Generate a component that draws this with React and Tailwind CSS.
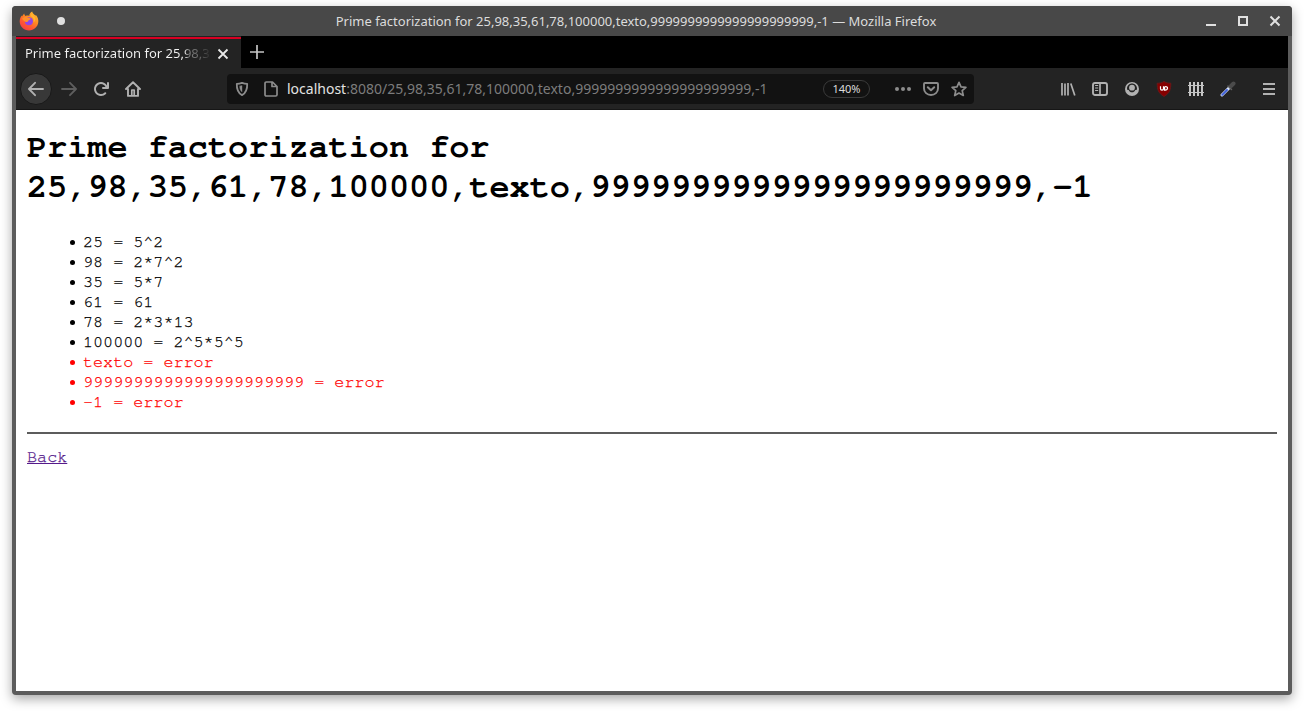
import React from "react";

const PATH = "25,98,35,61,78,100000,texto,9999999999999999999999,-1";

const RESULTS = [
  { n: "25", f: "5^2" },
  { n: "98", f: "2*7^2" },
  { n: "35", f: "5*7" },
  { n: "61", f: "61" },
  { n: "78", f: "2*3*13" },
  { n: "100000", f: "2^5*5^5" },
  { n: "texto", f: "error" },
  { n: "9999999999999999999999", f: "error" },
  { n: "-1", f: "error" },
];

function Icon({ children, className = "text-[#b1b1b1]" }) {
  return (
    <svg
      viewBox="0 0 16 16"
      className={"block size-4 shrink-0 " + className}
      fill="none"
      stroke="currentColor"
      strokeWidth="2"
      strokeLinecap="round"
      strokeLinejoin="round"
    >
      {children}
    </svg>
  );
}

function Firefox() {
  return (
    <svg viewBox="0 0 20 20" className="block size-5 shrink-0">
      <defs>
        <linearGradient id="flame" x1="0.8" y1="0.1" x2="0.2" y2="1">
          <stop offset="0" stopColor="#ffb52e" />
          <stop offset="0.35" stopColor="#ff8a22" />
          <stop offset="0.65" stopColor="#ff5a30" />
          <stop offset="1" stopColor="#f53a45" />
        </linearGradient>
      </defs>
      <path
        d="M13.2.4c.2 2 2 2.600 3.300 4.200l.6-.3c1.700 2 2.500 4.200 2.200 6.700-.5 5-4.400 8.400-9.300 8.400C4.900 19.400.7 15.500.7 10.500c0-2.300.7-4.500 2.100-6l.2 1.100C3.700 4.400 4.300 3.300 5.200 2.500c.1 1.200.7 2 1.300 2.500 1.200-.5 2.600-.6 3.800-.1C10.300 3 11.300 1.300 13.200.4z"
        fill="url(#flame)"
      />
      <circle cx="9.900" cy="10.200" r="4" fill="#9045e6" />
      <path d="M3 7.500c2-1.800 4.700-2.200 6.700-.5 1 .1 1.800.3 2 .7-.3 1-1.900 1.300-2.500 2-.2 1.300-1.700 1.500-2.800 1C5.100 10.100 4.100 9.300 3 7.500z" fill="#ff8f2b" />
      <path d="M11.800 5c2.800 1.300 3.700 4 2.500 6.500 1.500-1 2.100-2.300 2.100-4-.7-2.500-2.800-3-3.200-5-.8.700-1.300 1.500-1.400 2.500z" fill="#ffb431" />
    </svg>
  );
}

function TitleBar() {
  return (
    <div className="flex h-[30px] items-center rounded-t-[4px] bg-[#484848] pl-[7px] pr-[9px]">
      <Firefox />
      <div className="ml-[18px] size-2 rounded-full bg-[#e0e0e0]" />
      <div className="flex-1 pl-[4px] text-center text-[13px] leading-[30px] tracking-[-0.01px] text-[#dcdcdc]">
        <span className="inline-block whitespace-nowrap">Prime factorization for {PATH} — Mozilla Firefox</span>
      </div>
      <div className="flex items-center gap-4 text-[#e0e0e0]">
        <svg viewBox="0 0 16 16" className="block size-4"><path d="M3 11h10v2H3z" fill="currentColor" /></svg>
        <svg viewBox="0 0 16 16" className="block size-4"><path d="M4 4h8v8H4z" fill="none" stroke="currentColor" strokeWidth="2" /></svg>
        <svg viewBox="0 0 16 16" className="block size-4"><path d="M3.500 3.500l9 9m0-9l-9 9" fill="none" stroke="currentColor" strokeWidth="2" /></svg>
      </div>
    </div>
  );
}

function TabBar() {
  return (
    <div className="flex h-8 bg-black">
      <div className="w-[225px] bg-[#232323] pt-px">
        <div className="flex h-[31px] items-center border-t-2 border-[#d70022] pl-[9px]">
          <div className="w-[190px] whitespace-nowrap bg-[linear-gradient(90deg,#f4f4f4_84%,#808080_86%,#606060_93%,#232323_98%)] bg-clip-text text-[13px] text-transparent">
            Prime factorization for 25,98,3
          </div>
          <svg viewBox="0 0 16 16" className="block size-4 text-[#e8e8e8]">
            <path d="M3.500 3.500l9 9m0-9l-9 9" fill="none" stroke="currentColor" strokeWidth="1.800" />
          </svg>
        </div>
      </div>
      <div className="flex w-8 items-center justify-center text-[#c4c4c4]">
        <svg viewBox="0 0 16 16" className="block size-4"><path d="M8 1v14M1 8h14" fill="none" stroke="currentColor" strokeWidth="1.700" /></svg>
      </div>
    </div>
  );
}

function UrlBar() {
  return (
    <div className="ml-[86px] flex h-[30px] w-[747px] items-center rounded-[4px] bg-[#121212] pl-[7px] pr-[7px]">
      <Icon className="text-[#8c8c8c]">
        <path d="M8 1.900c2 .7 3.500.9 5.200.9.200 5.200-.7 9-5.200 11.300C3.500 11.800 2.600 8 2.800 2.800 4.500 2.800 6 2.600 8 1.900z" strokeWidth="1.800" />
        <path d="M8 4.800v6.100C6.200 9.500 5.700 7.500 5.700 5.200z" fill="currentColor" strokeWidth="0.400" />
      </Icon>
      <Icon className="ml-[13px] text-[#8c8c8c]">
        <path d="M3.300 1h6.200l4.500 4.500v8.200c0 .8-.5 1.300-1.300 1.300H3.300C2.500 15 2 14.500 2 13.700V2.300C2 1.500 2.500 1 3.300 1zM9 1.200v4.300h4.500" strokeWidth="1.700" />
      </Icon>
      <div className="ml-[8px] w-[536px] whitespace-nowrap text-[14px] text-[#7c7c7c]">
        <span className="text-[#e3e3e3]">localhost</span>:8080/{PATH}
      </div>
      <div className="flex h-[18px] w-[47px] items-center justify-center rounded-full border border-[#3a3a3a] pt-px text-[11px] text-[#dcdcdc]">140%</div>
      <div className="ml-auto flex items-center gap-3">
        <Icon className="text-[#8c8c8c]">
          <g fill="currentColor" stroke="none">
            <circle cx="2" cy="8" r="2" /><circle cx="8" cy="8" r="2" /><circle cx="14" cy="8" r="2" />
          </g>
        </Icon>
        <Icon className="text-[#8c8c8c]">
          <path d="M2 2h12c.6 0 1 .4 1 1v4.500c0 3.700-3 6.500-7 6.500s-7-2.800-7-6.500V3c0-.6.4-1 1-1z" strokeWidth="1.900" />
          <path d="M4.800 6.300L8 9.300l3.200-3" />
        </Icon>
        <Icon className="text-[#8c8c8c]">
          <path d="M8 1.300l2 4.500 4.900.5-3.700 3.300 1.100 4.900L8 12l-4.300 2.500 1.100-4.900L1.100 6.300 6 5.800z" strokeWidth="1.700" />
        </Icon>
      </div>
    </div>
  );
}

function Toolbar() {
  return (
    <div className="flex h-[42px] items-center border-b border-[#161616] bg-[#232323] pl-1">
      <div className="flex size-8 items-center justify-center rounded-full border border-[#191919] bg-[#383838]">
        <Icon>
          <path d="M15 8H1.300M7 1.800L1 8l6 6.200" strokeWidth="1.900" />
        </Icon>
      </div>
      <div className="ml-[9px] flex gap-4">
        <Icon className="text-[#5e5e5e]">
          <path d="M1 8h13.700M9 1.800L15 8l-6 6.200" strokeWidth="1.800" />
        </Icon>
        <Icon>
          <path
            d="M15 1a1 1 0 0 0-1 1v2.418A6.995 6.995 0 1 0 8 15a6.954 6.954 0 0 0 4.950-2.050 1 1 0 0 0-1.414-1.414A5.019 5.019 0 1 1 12.549 6H10a1 1 0 0 0 0 2h5a1 1 0 0 0 1-1V2a1 1 0 0 0-1-1z"
            fill="currentColor"
            stroke="none"
          />
        </Icon>
        <Icon>
          <path d="M1 8l7-6.800L15 8M3 8v6.900h10V8" strokeWidth="1.900" />
          <path d="M6.800 14V9h2.400v5" strokeWidth="1.700" />
        </Icon>
      </div>
      <UrlBar />
      <div className="ml-auto flex items-center gap-4 pr-[11px]">
        <Icon>
          <path d="M2 2v12.500M5 2.500v12M8 2v12.500M10.800 2.500l4 12" strokeWidth="1.700" strokeLinecap="butt" />
        </Icon>
        <Icon>
          <rect x="1" y="2" width="14" height="12" rx="2" strokeWidth="1.900" />
          <path d="M8 2v12" strokeWidth="1.700" />
          <path d="M3.500 4.500h2.300M3.500 7h2.300M3.500 9.500h2.300" strokeWidth="1" />
        </Icon>
        <Icon>
          <circle cx="8" cy="8" r="7" fill="currentColor" stroke="none" />
          <path d="M8 2.500c-2.700 0-5 2.200-5 5 0 .6.200 1.200.5 1.500h1.200C5.300 10.500 6.500 11.300 8 11.300s2.700-.8 3.300-2.300h1.200c.3-.3.500-.9.500-1.500 0-2.800-2.300-5-5-5z" fill="#232323" stroke="none" />
          <circle cx="8" cy="6.700" r="2.900" fill="currentColor" stroke="none" />
        </Icon>
        <svg viewBox="0 0 16 16" className="block size-4">
          <path d="M8 .4c2.200 1.500 4.500 1.800 6.800 1.800 0 6.200-.8 9.800-6.800 13.300C2 12 1.200 8.400 1.200 2.200 3.500 2.200 5.800 1.900 8 .4z" fill="#860000" stroke="#6a1a1c" strokeWidth="0.800" />
          <path d="M4.500 5.200v2.600c0 1.800 3 1.800 3 0V5.200M8.600 5.400v3.700c3.800.2 3.800-4 .6-3.500" fill="none" stroke="#fff" strokeWidth="1.200" />
        </svg>
        <Icon className="text-[#c4c4c4]">
          <path d="M2 1v14M6 1v14M10 1v14M14 1v14" strokeWidth="2" strokeLinecap="butt" />
          <path d="M0 4.500h16M0 11.500h16" strokeWidth="1.200" strokeLinecap="butt" />
        </Icon>
        <svg viewBox="0 0 16 16" className="block size-4" fill="none" strokeLinecap="round">
          <path d="M2 14l7.500-7.500" stroke="#d8e4fb" strokeWidth="3" />
          <path d="M2.200 13.800L7 9" stroke="#3e5ed8" strokeWidth="1.900" />
          <path d="M8 5l3.500 3.500" stroke="#606060" strokeWidth="1.500" />
          <path d="M11 5l2.500-2.500" stroke="#4b4b4b" strokeWidth="4" />
        </svg>
        <Icon className="ml-[9px] text-[#b1b1b1]">
          <path d="M2 3h12M2 8h12M2 13h12" strokeWidth="2" strokeLinecap="butt" />
        </Icon>
      </div>
    </div>
  );
}

function Page() {
  return (
    <div className="flex-1 bg-white px-[11px] pt-[17px] font-['FreeMono','Liberation_Mono',monospace] text-[16.8px] leading-5 text-black">
      <h1 className="text-[33.6px] font-bold leading-10 tracking-[-0.04px]">
        Prime factorization for
        <br />
        <span className="whitespace-nowrap">{PATH}</span>
      </h1>
      <ul className="mt-[25px] tracking-[-0.02px] [-webkit-text-stroke:0.25px_currentColor]">
        {RESULTS.map((r) => (
          <li key={r.n} className={r.f === "error" ? "flex items-center pl-[43px] text-[#ff0000]" : "flex items-center pl-[43px]"}>
            <span className="mr-[8px] mt-px size-[5px] rounded-full bg-current" />
            <span className="whitespace-pre">{r.n} = {r.f}</span>
          </li>
        ))}
      </ul>
      <hr className="mt-5 border-t-2 border-[#5c5c5c]" />
      <a href="#" className="mt-[13px] inline-block text-[#551a8b] underline [-webkit-text-stroke:0.25px_currentColor]">Back</a>
    </div>
  );
}

export default function App() {
  return (
    <div className="h-[711px] w-[1304px] overflow-hidden bg-white px-3 pt-[6px] font-['Noto_Sans',sans-serif]">
      <div className="flex h-[689px] flex-col rounded-[4px] bg-[#5c5c5c] shadow-[0_4px_12px_rgba(0,0,0,0.35)]">
        <TitleBar />
        <div className="flex flex-1 flex-col px-1 pb-1">
          <TabBar />
          <Toolbar />
          <Page />
        </div>
      </div>
    </div>
  );
}
